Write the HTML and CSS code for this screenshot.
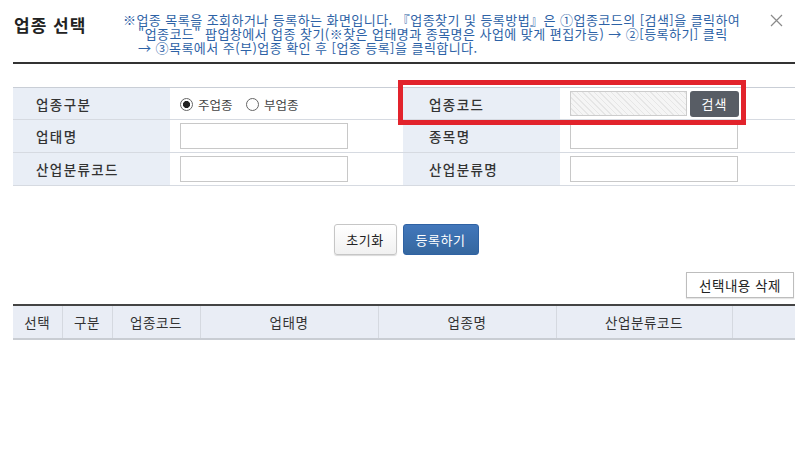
FILE: index.html
```html
<!DOCTYPE html>
<html lang="ko">
<head>
  <meta charset="UTF-8">
  <title>업종 선택</title>
  <link rel="stylesheet" href="styles.css">
</head>
<body>
  <div class="popup">
    <header class="popup-head">
      <h1 class="popup-title">업종 선택</h1>
      <p class="popup-notice">※업종 목록을 조회하거나 등록하는 화면입니다. 『업종찾기 및 등록방법』은 ①업종코드의 [검색]을 클릭하여<br>"업종코드" 팝업창에서 업종 찾기(※찾은 업태명과 종목명은 사업에 맞게 편집가능) → ②[등록하기] 클릭<br>→ ③목록에서 주(부)업종 확인 후 [업종 등록]을 클릭합니다.</p>
      <button class="popup-close" type="button" aria-label="닫기">
        <svg width="13" height="13" viewBox="0 0 13 13"><path d="M1 1L12 12M12 1L1 12" stroke="#8a8a8a" stroke-width="1.2" fill="none"/></svg>
      </button>
    </header>

    <div class="form-wrap">
      <table class="form-table">
        <colgroup>
          <col class="col-label"><col class="col-value-left"><col class="col-label-right"><col>
        </colgroup>
        <tr class="row-first">
          <th>업종구분</th>
          <td>
            <label class="radio"><input type="radio" name="kind" checked> 주업종</label>
            <label class="radio"><input type="radio" name="kind"> 부업종</label>
          </td>
          <th class="th-right">업종코드</th>
          <td>
            <div class="code-field">
              <input type="text" class="input-code" disabled>
              <button type="button" class="btn-search">검색</button>
            </div>
          </td>
        </tr>
        <tr>
          <th>업태명</th>
          <td><input type="text" class="input-text"></td>
          <th class="th-right">종목명</th>
          <td><input type="text" class="input-text"></td>
        </tr>
        <tr>
          <th>산업분류코드</th>
          <td><input type="text" class="input-text"></td>
          <th class="th-right">산업분류명</th>
          <td><input type="text" class="input-text"></td>
        </tr>
      </table>
      <div class="highlight-box"></div>
    </div>

    <div class="form-actions">
      <button type="button" class="btn btn-reset">초기화</button>
      <button type="button" class="btn btn-primary">등록하기</button>
    </div>

    <div class="list-tools">
      <button type="button" class="btn btn-delete">선택내용 삭제</button>
    </div>

    <table class="list-table">
      <colgroup>
        <col style="width:49px"><col style="width:50px"><col style="width:88px"><col style="width:178px"><col style="width:178px"><col style="width:176px"><col>
      </colgroup>
      <thead>
        <tr>
          <th>선택</th>
          <th>구분</th>
          <th>업종코드</th>
          <th>업태명</th>
          <th>업종명</th>
          <th>산업분류코드</th>
          <th></th>
        </tr>
      </thead>
    </table>
  </div>
</body>
</html>
```

FILE: styles.css
```css
/* Base */
* {
  margin: 0;
  padding: 0;
  box-sizing: border-box;
}

body {
  font-family: "Noto Sans CJK KR", "Noto Sans", sans-serif;
  color: #333333;
  background: #ffffff;
}

button,
input {
  font-family: inherit;
}

.popup {
  width: 800px;
  padding: 0 5px 0 13px;
}

/* Header */
.popup-head {
  display: flex;
  align-items: flex-start;
  height: 64px;
  border-bottom: 2px solid #333333;
}

.popup-title {
  width: 110px;
  padding: 13px 0 0 1px;
  font-size: 17px;
  font-weight: 700;
  line-height: 24px;
  color: #222222;
  letter-spacing: 1px;
}

.popup-notice {
  padding: 13px 0 0 15px;
  text-indent: -15px;
  font-size: 13px;
  line-height: 14px;
  letter-spacing: 0.45px;
  color: #2d62a6;
  white-space: nowrap;
}

.popup-close {
  margin: 14px 12px 0 auto;
  border: none;
  background: none;
  line-height: 0;
}

/* Form table */
.form-wrap {
  position: relative;
  margin-top: 23px;
}

.form-table {
  width: 782px;
  border-collapse: collapse;
  table-layout: fixed;
}

.col-label {
  width: 157px;
}

.col-value-left {
  width: 233px;
}

.col-label-right {
  width: 157px;
}

.form-table th,
.form-table td {
  height: 33px;
  border-top: 1px solid #d6dae1;
  border-bottom: 1px solid #d6dae1;
  vertical-align: middle;
}

.form-table tr.row-first th,
.form-table tr.row-first td {
  height: 32px;
  border-top-color: #c9ced6;
}

.form-table th {
  padding-left: 23px;
  background: #e9eef6;
  font-size: 13.5px;
  font-weight: 500;
  letter-spacing: 1.4px;
  text-align: left;
  color: #333333;
}

.form-table th.th-right {
  padding-left: 26px;
}

.form-table td {
  padding-left: 10px;
}

.radio {
  display: inline-flex;
  align-items: center;
  margin-right: 9px;
  font-size: 12.5px;
  color: #444444;
}

.radio input {
  appearance: none;
  width: 13px;
  height: 13px;
  margin-right: 5px;
  border: 1px solid #666666;
  border-radius: 50%;
  background: #ffffff;
}

.radio input:checked {
  background: radial-gradient(circle, #222222 0 3.3px, #ffffff 3.8px);
}

.input-text {
  display: block;
  width: 168px;
  height: 26px;
  border: 1px solid #c8c8c8;
  background: #ffffff;
}

.code-field {
  display: flex;
  align-items: center;
  gap: 3px;
}

.input-code {
  width: 117px;
  height: 25px;
  border: 1px solid #cccccc;
  background: repeating-linear-gradient(45deg, #e6e6e6 0 1px, #f5f5f5 1px 4px);
}

.btn-search {
  width: 49px;
  height: 26px;
  border: none;
  border-radius: 3px;
  background: #585d65;
  color: #ffffff;
  font-size: 13px;
  letter-spacing: 1px;
}

/* Red highlight over the code field */
.highlight-box {
  position: absolute;
  left: 385px;
  top: -7px;
  width: 348px;
  height: 45px;
  border: 5px solid #e2232c;
}

/* Buttons */
.form-actions {
  display: flex;
  justify-content: center;
  gap: 6px;
  margin-top: 38px;
  padding-left: 4px;
}

.btn {
  height: 31px;
  border-radius: 3px;
  font-size: 13px;
  letter-spacing: 0.5px;
}

.btn-reset {
  width: 63px;
  border: 1px solid #c6c6c6;
  background: linear-gradient(#ffffff, #f1f1f1);
  color: #222222;
  box-shadow: 0 1px 1px rgba(0, 0, 0, 0.15);
}

.btn-primary {
  width: 76px;
  border: 1px solid #2f62a3;
  background: linear-gradient(#4277bb, #35679f);
  color: #ffffff;
}

.list-tools {
  display: flex;
  justify-content: flex-end;
  margin-top: 17px;
}

.btn-delete {
  width: 108px;
  height: 26px;
  margin-right: 1px;
  border: 1px solid #bdbdbd;
  border-radius: 0;
  background: #ffffff;
  color: #222222;
  font-size: 13.5px;
  box-shadow: 0 1px 1px rgba(0, 0, 0, 0.1);
}

/* List table */
.list-table {
  width: 782px;
  margin-top: 6px;
  border-collapse: collapse;
  table-layout: fixed;
  border-top: 2px solid #444444;
}

.list-table th {
  height: 34px;
  border-left: 1px solid #d5d9e0;
  border-bottom: 2px solid #c9cdd3;
  background: #e9edf5;
  font-size: 13.5px;
  font-weight: 400;
  letter-spacing: 0.6px;
  color: #333333;
}

.list-table th:first-child {
  border-left: none;
}
```
